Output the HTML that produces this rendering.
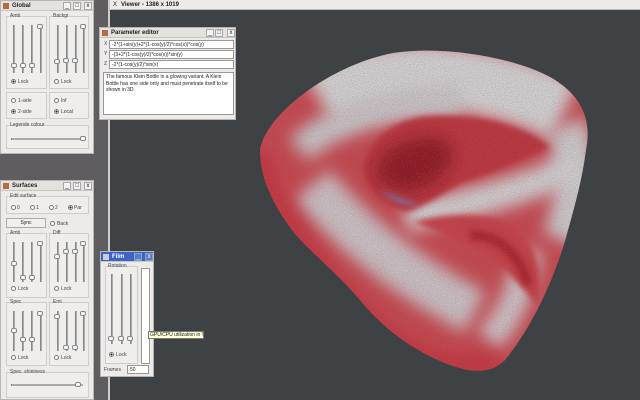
<!DOCTYPE html>
<html><head><meta charset="utf-8"><style>
*{box-sizing:border-box;margin:0;padding:0}
body{width:640px;height:400px;overflow:hidden;background:#5f5d60;font-family:"Liberation Sans",sans-serif;font-size:5px;color:#222;position:relative}
.win{position:absolute;background:#ecebe9;border:1px solid #b8b6b3}
.tb{height:10px;background:#e4e2df;border-bottom:1px solid #c8c6c3;font-weight:bold;font-size:6px;line-height:10px;padding-left:11px;position:relative}
.tb .ic{position:absolute;left:2px;top:2px;width:6px;height:6px;background:#b66a4a}
.tb .bt{position:absolute;top:1px;width:8px;height:8px;border:1px solid #aaa;background:#f4f3f1;font-size:6px;line-height:6px;text-align:center;font-weight:normal}
.grp{position:absolute;border:1px solid #cfcdca;background:#efeeec}
.lbl{position:absolute;font-size:5px;color:#444}
.sl{position:absolute;width:2px;background:#aaa;border-left:1px solid #888}
.kn{position:absolute;width:6px;height:5px;border:1px solid #888;background:#f7f7f7;border-radius:2px}
.rd{position:absolute;width:5px;height:5px;border:1px solid #777;border-radius:50%;background:#fff}
.rd.on{background:radial-gradient(#222 40%,#fff 50%)}
.inp{position:absolute;background:#fff;border:1px solid #9a9896;font-size:5px;line-height:8px;padding-left:2px;white-space:nowrap;overflow:hidden}
</style></head><body>
<div style="position:absolute;left:108px;top:0;width:532px;height:400px;background:#3e4244;border-left:2px solid #cfcdca"></div>
<div style="position:absolute;left:110px;top:0;width:530px;height:10px;background:#ecebe9;border-bottom:1px solid #bbb;font-weight:bold;font-size:6px;line-height:10px;padding-left:11px">Viewer - 1386 x 1019<span style="position:absolute;left:3px;font-weight:normal">X</span></div>

<svg style="position:absolute;left:0;top:0" width="640" height="400">
<defs>
<clipPath id="cp"><path d="M260,150 C265,115 330,65 393,53 C445,45 515,58 550,77 C582,95 592,120 586,150 C582,180 575,205 568,230 C555,280 530,330 505,360 C490,375 470,372 450,365 C410,350 380,325 360,300 C330,265 300,245 285,220 C268,195 260,172 260,150Z"/></clipPath>
<filter id="b6" filterUnits="userSpaceOnUse" x="0" y="0" width="640" height="400"><feGaussianBlur stdDeviation="8"/></filter>
<filter id="b3" filterUnits="userSpaceOnUse" x="0" y="0" width="640" height="400"><feGaussianBlur stdDeviation="3"/></filter>
<filter id="nz" filterUnits="userSpaceOnUse" x="0" y="0" width="640" height="400"><feTurbulence type="fractalNoise" baseFrequency="0.9" numOctaves="1" seed="3"/><feColorMatrix type="matrix" values="0 0 0 0 0.2  0 0 0 0 0.2  0 0 0 0 0.2  0 0 0 -2.2 1.25"/></filter>
</defs>
<g clip-path="url(#cp)">
<rect x="240" y="40" width="360" height="340" fill="#c4454d"/>
<path d="M320,100 C370,68 470,66 565,110" stroke="#d0cdcf" stroke-width="65" fill="none" filter="url(#b6)"/>
<path d="M300,150 C330,118 400,103 460,100" stroke="#c6bfc3" stroke-width="30" fill="none" filter="url(#b6)"/>
<path d="M565,125 C580,160 577,200 562,240" stroke="#c9c5c8" stroke-width="40" fill="none" filter="url(#b6)"/>
<path d="M405,217 C460,207 520,192 580,165" stroke="#cfcbcd" stroke-width="30" fill="none" filter="url(#b6)"/>
<path d="M312,185 C348,228 398,272 475,312" stroke="#c8bcc0" stroke-width="46" fill="none" filter="url(#b6)"/>
<path d="M528,250 C523,290 508,320 488,340" stroke="#ccbfc3" stroke-width="28" fill="none" filter="url(#b6)"/>
<path d="M363,168 C370,135 400,118 430,116 C480,114 525,125 550,148 C520,160 490,175 463,182 C440,195 420,210 405,212 C385,205 366,190 363,168Z" fill="#b8303a" filter="url(#b3)"/>
<path d="M375,170 C385,145 410,135 440,138 C460,145 455,170 430,185 C405,198 380,190 375,170Z" fill="#8e1820" filter="url(#b6)"/>
<path d="M378,190 C392,200 405,207 420,205 C405,200 392,195 378,190Z" fill="#7a74a8" filter="url(#b3)"/>
<path d="M413,222 C450,212 495,212 515,228 C540,245 545,285 537,305 C520,285 505,268 490,258 C470,245 440,232 413,222Z" fill="#c33c45" filter="url(#b3)"/>
<path d="M470,235 C500,235 520,255 528,285" stroke="#a8232c" stroke-width="10" fill="none" filter="url(#b3)"/>
<path d="M258,150 C268,210 318,270 368,322 C408,357 450,374 500,362" stroke="#c2323c" stroke-width="24" fill="none" filter="url(#b6)"/>
<path d="M340,300 C350,320 360,335 372,345" stroke="#b8a6d0" stroke-width="8" fill="none" filter="url(#b3)"/>
<rect x="240" y="40" width="360" height="340" filter="url(#nz)" opacity="0.45"/>
</g>
</svg>

<!-- Global -->
<div class="win" style="left:0;top:0;width:94px;height:154px">
<div class="tb"><span class="ic"></span>Global<span class="bt" style="left:62px">_</span><span class="bt" style="left:72px">□</span><span class="bt" style="left:83px">x</span></div>
<div class="grp" style="left:5px;top:15px;width:41px;height:73px"></div><div class="lbl" style="left:9px;top:12px">Amb</div>
<div class="grp" style="left:48px;top:15px;width:40px;height:73px"></div><div class="lbl" style="left:52px;top:12px">Backgr</div>
<div class="sl" style="left:12px;top:24px;height:48px"></div><div class="sl" style="left:21px;top:24px;height:48px"></div><div class="sl" style="left:30px;top:24px;height:48px"></div><div class="sl" style="left:39px;top:24px;height:48px"></div>
<div class="kn" style="left:10px;top:62px"></div><div class="kn" style="left:19px;top:62px"></div><div class="kn" style="left:28px;top:62px"></div><div class="kn" style="left:36px;top:23px"></div>
<div class="sl" style="left:56px;top:24px;height:48px"></div><div class="sl" style="left:65px;top:24px;height:48px"></div><div class="sl" style="left:74px;top:24px;height:48px"></div><div class="sl" style="left:82px;top:24px;height:48px"></div>
<div class="kn" style="left:53px;top:58px"></div><div class="kn" style="left:62px;top:57px"></div><div class="kn" style="left:71px;top:57px"></div><div class="kn" style="left:79px;top:23px"></div>
<div class="rd on" style="left:10px;top:78px"></div><div class="lbl" style="left:17px;top:78px">Lock</div>
<div class="rd" style="left:53px;top:78px"></div><div class="lbl" style="left:60px;top:78px">Lock</div>
<div class="grp" style="left:5px;top:91px;width:41px;height:27px"></div><div class="grp" style="left:48px;top:91px;width:40px;height:27px"></div>
<div class="rd" style="left:10px;top:97px"></div><div class="lbl" style="left:17px;top:97px">1-side</div>
<div class="rd on" style="left:10px;top:108px"></div><div class="lbl" style="left:17px;top:108px">2-side</div>
<div class="rd" style="left:53px;top:97px"></div><div class="lbl" style="left:60px;top:97px">Inf</div>
<div class="rd on" style="left:53px;top:108px"></div><div class="lbl" style="left:60px;top:108px">Local</div>
<div class="grp" style="left:5px;top:124px;width:83px;height:24px"></div><div class="lbl" style="left:9px;top:121px">Legende colour</div>
<div class="sl" style="left:10px;top:137px;width:72px;height:2px"></div><div class="kn" style="left:79px;top:135px"></div>
</div>

<!-- Surfaces -->
<div class="win" style="left:0;top:180px;width:94px;height:220px">
<div class="tb"><span class="ic"></span>Surfaces<span class="bt" style="left:62px">_</span><span class="bt" style="left:72px">□</span><span class="bt" style="left:83px">x</span></div>
<div class="grp" style="left:5px;top:15px;width:83px;height:18px"></div><div class="lbl" style="left:9px;top:12px">Edit surface</div>
<div class="rd" style="left:10px;top:24px"></div><div class="lbl" style="left:16px;top:24px">0</div>
<div class="rd" style="left:29px;top:24px"></div><div class="lbl" style="left:35px;top:24px">1</div>
<div class="rd" style="left:48px;top:24px"></div><div class="lbl" style="left:54px;top:24px">2</div>
<div class="rd on" style="left:67px;top:24px"></div><div class="lbl" style="left:73px;top:24px">Par</div>
<div style="position:absolute;left:5px;top:37px;width:40px;height:10px;border:1px solid #aaa;background:#f0efed;text-align:center;line-height:9px">Sync</div>
<div class="rd" style="left:49px;top:40px"></div><div class="lbl" style="left:56px;top:40px">Back</div>
<div class="grp" style="left:5px;top:52px;width:41px;height:65px"></div><div class="lbl" style="left:9px;top:49px">Amb</div>
<div class="grp" style="left:48px;top:52px;width:40px;height:65px"></div><div class="lbl" style="left:52px;top:49px">Diff</div>
<div class="grp" style="left:5px;top:121px;width:41px;height:64px"></div><div class="lbl" style="left:9px;top:118px">Spec</div>
<div class="grp" style="left:48px;top:121px;width:40px;height:64px"></div><div class="lbl" style="left:52px;top:118px">Emi</div>
<div class="sl" style="left:12px;top:61px;height:40px"></div><div class="sl" style="left:21px;top:61px;height:40px"></div><div class="sl" style="left:30px;top:61px;height:40px"></div><div class="sl" style="left:39px;top:61px;height:40px"></div>
<div class="kn" style="left:10px;top:80px"></div><div class="kn" style="left:19px;top:94px"></div><div class="kn" style="left:28px;top:94px"></div><div class="kn" style="left:36px;top:60px"></div>
<div class="sl" style="left:56px;top:61px;height:40px"></div><div class="sl" style="left:65px;top:61px;height:40px"></div><div class="sl" style="left:74px;top:61px;height:40px"></div><div class="sl" style="left:82px;top:61px;height:40px"></div>
<div class="kn" style="left:53px;top:73px"></div><div class="kn" style="left:62px;top:68px"></div><div class="kn" style="left:71px;top:68px"></div><div class="kn" style="left:79px;top:60px"></div>
<div class="rd" style="left:10px;top:105px"></div><div class="lbl" style="left:17px;top:105px">Lock</div>
<div class="rd" style="left:53px;top:105px"></div><div class="lbl" style="left:60px;top:105px">Lock</div>
<div class="sl" style="left:12px;top:130px;height:40px"></div><div class="sl" style="left:21px;top:130px;height:40px"></div><div class="sl" style="left:30px;top:130px;height:40px"></div><div class="sl" style="left:39px;top:130px;height:40px"></div>
<div class="kn" style="left:10px;top:147px"></div><div class="kn" style="left:19px;top:156px"></div><div class="kn" style="left:28px;top:156px"></div><div class="kn" style="left:36px;top:130px"></div>
<div class="sl" style="left:56px;top:130px;height:40px"></div><div class="sl" style="left:65px;top:130px;height:40px"></div><div class="sl" style="left:74px;top:130px;height:40px"></div><div class="sl" style="left:82px;top:130px;height:40px"></div>
<div class="kn" style="left:53px;top:133px"></div><div class="kn" style="left:62px;top:164px"></div><div class="kn" style="left:71px;top:164px"></div><div class="kn" style="left:79px;top:130px"></div>
<div class="rd" style="left:10px;top:174px"></div><div class="lbl" style="left:17px;top:174px">Lock</div>
<div class="rd" style="left:53px;top:174px"></div><div class="lbl" style="left:60px;top:174px">Lock</div>
<div class="grp" style="left:5px;top:191px;width:83px;height:26px"></div><div class="lbl" style="left:9px;top:188px">Spec. shininess</div>
<div class="sl" style="left:10px;top:203px;width:72px;height:2px"></div><div class="kn" style="left:74px;top:201px"></div>
</div>

<!-- Parameter editor -->
<div class="win" style="left:99px;top:27px;width:137px;height:93px">
<div class="tb"><span class="ic"></span>Parameter editor<span class="bt" style="left:106px">_</span><span class="bt" style="left:115px">□</span><span class="bt" style="left:127px">x</span></div>
<div class="lbl" style="left:4px;top:13px">X</div><div class="inp" style="left:9px;top:12px;width:125px;height:9px">-2*(1+sin(y)+2*(1-cos(y)/2)*cos(x))*cos(y)</div>
<div class="lbl" style="left:4px;top:23px">Y</div><div class="inp" style="left:9px;top:22px;width:125px;height:9px">-(3+2*(1-cos(y)/2)*cos(x))*sin(y)</div>
<div class="lbl" style="left:4px;top:33px">Z</div><div class="inp" style="left:9px;top:32px;width:125px;height:9px">-2*(1-cos(y)/2)*sin(x)</div>
<div class="inp" style="left:3px;top:44px;width:131px;height:43px;white-space:normal;line-height:6.5px;padding:1px 2px">The famous Klein Bottle in a glowing variant. A Klein Bottle has one side only and must penetrate itself to be shown in 3D.</div>
</div>

<!-- Film -->
<div class="win" style="left:100px;top:251px;width:54px;height:126px">
<div class="tb" style="background:#3d63c8;color:#fff"><span class="ic" style="background:#ccc"></span>Film<span class="bt" style="left:33px;background:#5a7ad4;border-color:#8aa">_</span><span class="bt" style="left:44px;background:#5a7ad4;border-color:#8aa;color:#fff">x</span></div>
<div class="grp" style="left:4px;top:14px;width:33px;height:98px"></div><div class="lbl" style="left:7px;top:11px">Rotation</div>
<div class="sl" style="left:10px;top:22px;height:70px"></div><div class="sl" style="left:20px;top:22px;height:70px"></div><div class="sl" style="left:29px;top:22px;height:70px"></div>
<div class="kn" style="left:7px;top:84px"></div><div class="kn" style="left:17px;top:84px"></div><div class="kn" style="left:26px;top:84px"></div>
<div class="rd on" style="left:8px;top:100px"></div><div class="lbl" style="left:15px;top:100px">Lock</div>
<div style="position:absolute;left:40px;top:16px;width:9px;height:96px;background:#fff;border:1px solid #999"></div>
<div class="lbl" style="left:3px;top:115px">Frames</div><div class="inp" style="left:26px;top:113px;width:22px;height:9px">50</div>
</div>
<div style="position:absolute;left:148px;top:331px;width:56px;height:8px;background:#ffffd8;border:1px solid #777;font-size:5px;line-height:6px;padding-left:1px;white-space:nowrap;overflow:hidden">GPU/CPU utilization in %</div>
</body></html>
